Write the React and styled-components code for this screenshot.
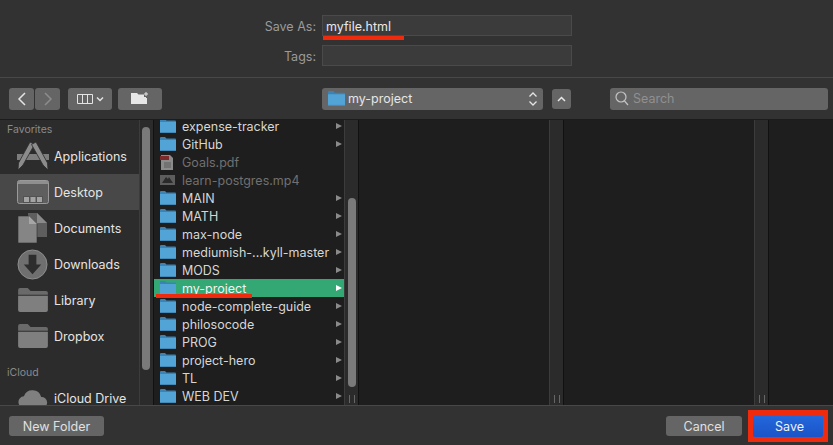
import React from 'react'
import styled, { createGlobalStyle } from 'styled-components'

const favorites = [
    { name: 'Applications', icon: 'apps' },
    { name: 'Desktop', icon: 'desktop', active: true },
    { name: 'Documents', icon: 'docs' },
    { name: 'Downloads', icon: 'downloads' },
    { name: 'Library', icon: 'folder' },
    { name: 'Dropbox', icon: 'folder' },
]

const files = [
    { name: 'expense-tracker' },
    { name: 'GitHub' },
    { name: 'Goals.pdf', kind: 'pdf' },
    { name: 'learn-postgres.mp4', kind: 'video' },
    { name: 'MAIN' },
    { name: 'MATH' },
    { name: 'max-node' },
    { name: 'mediumish-...kyll-master' },
    { name: 'MODS' },
    { name: 'my-project', selected: true },
    { name: 'node-complete-guide' },
    { name: 'philosocode' },
    { name: 'PROG' },
    { name: 'project-hero' },
    { name: 'TL' },
    { name: 'WEB DEV' },
]

const SideIcon = ({ type }) => {
    if (type === 'apps') return (
        <svg width="32" height="30" viewBox="0 0 32 30">
            <rect x="0" y="13" width="32" height="6" fill="#7d7d7d" />
            <path d="M13 1l4.500 2.500L6 24l-5 5 .5-7z" fill="#8c8c8c" stroke="#2c2c2c" strokeWidth=".8" />
            <path d="M19 1l-4.500 2.500L26 24l5 5-.5-7z" fill="#8c8c8c" stroke="#2c2c2c" strokeWidth=".8" />
        </svg>
    )
    if (type === 'desktop') return (
        <svg width="32" height="24" viewBox="0 0 32 24">
            <rect x=".5" y=".5" width="31" height="23" rx="2" fill="#5f5f5f" stroke="#9a9a9a" />
            <rect x="1" y="1" width="30" height="3" fill="#8f8f8f" />
            <rect x="6" y="16" width="20" height="7" fill="#525252" />
            <rect x="7" y="17" width="5" height="5" fill="#a3a3a3" />
            <rect x="13.500" y="17" width="5" height="5" fill="#a3a3a3" />
            <rect x="20" y="17" width="5" height="5" fill="#a3a3a3" />
        </svg>
    )
    if (type === 'docs') return (
        <svg width="29" height="30" viewBox="0 0 29 30">
            <path d="M10 0h9l10 10v14H10z" fill="#5e5e5e" />
            <path d="M19 0v10h10z" fill="#8a8a8a" />
            <path d="M0 3h11l8 8v19H0z" fill="#858585" stroke="#2c2c2c" strokeWidth=".6" />
            <path d="M11 3v8h8z" fill="#a6a6a6" />
        </svg>
    )
    if (type === 'downloads') return (
        <svg width="31" height="31" viewBox="0 0 32 32">
            <circle cx="16" cy="16" r="15" fill="#6f6f6f" stroke="#8e8e8e" />
            <path d="M12 6h8v10h5l-9 10-9-10h5z" fill="#2d2d2d" />
        </svg>
    )
    if (type === 'cloud') return (
        <svg width="30" height="20" viewBox="0 0 32 22">
            <path d="M7 22a6.500 6.500 0 0 1-1-13 10 10 0 0 1 19 1 6 6 0 0 1 1 12z" fill="#7f7f7f" />
        </svg>
    )
    return (
        <svg width="30" height="24" viewBox="0 0 31 25">
            <path d="M0 2a2 2 0 0 1 2-2h8l3 3h16a2 2 0 0 1 2 2v2H0z" fill="#6a6a6a" />
            <path d="M0 8h31v15a2 2 0 0 1-2 2H2a2 2 0 0 1-2-2z" fill="#7f7f7f" />
        </svg>
    )
}

const BlueFolder = ({ big }) => (
    <svg width={big ? 17 : 16} height={big ? 15 : 14} viewBox="0 0 16 14">
        <path d="M0 1a1 1 0 0 1 1-1h4l1.500 1.500H15a1 1 0 0 1 1 1V4H0z" fill="#3a83b4" />
        <path d="M0 3h16v10a1 1 0 0 1-1 1H1a1 1 0 0 1-1-1z" fill="#52a3d6" />
        <rect y="13" width="16" height="1" fill="#4488b5" />
    </svg>
)

const FileIcon = ({ kind }) => {
    if (kind === 'pdf') return (
        <svg width="14" height="15" viewBox="0 0 14 15">
            <path d="M1 0h9l3 3v12H1z" fill="#8b8b8b" />
            <rect y="1" width="9" height="4" fill="#7c2a2a" />
            <path d="M4 8h7M4 10h7M4 12h7" stroke="#5a5a5a" />
        </svg>
    )
    if (kind === 'video') return (
        <svg width="15" height="10" viewBox="0 0 15 10">
            <rect width="15" height="10" fill="#5d5d5d" />
            <path d="M2 8l4-6 2 2 1-2 4 6z" fill="#2a2a2a" />
        </svg>
    )
    return <BlueFolder />
}

export default function App() {
    return (
        <Dialog>
            <GlobalStyle />
            <Header>
                <FieldLabel>Save As:</FieldLabel>
                <FieldInput>
                    myfile.html
                    <FileNameMark />
                </FieldInput>
                <FieldLabel>Tags:</FieldLabel>
                <FieldInput />
            </Header>

            <Toolbar>
                <NavGroup>
                    <ToolButton $w={25}>
                        <svg width="10" height="14" viewBox="0 0 10 14"><path d="M8 1L2 7l6 6" fill="none" stroke="#e4e4e4" strokeWidth="1.500" /></svg>
                    </ToolButton>
                    <ToolButton $w={25}>
                        <svg width="10" height="14" viewBox="0 0 10 14"><path d="M2 1l6 6-6 6" fill="none" stroke="#8c8c8c" strokeWidth="1.500" /></svg>
                    </ToolButton>
                </NavGroup>
                <ToolButton $w={44}>
                    <svg width="27" height="12" viewBox="0 0 27 12" fill="none" stroke="#e4e4e4">
                        <path d="M.5 1.500h15v9H.5zM5.500 1.500v9M10.500 1.500v9" />
                        <path d="M20 4.500l3 3 3-3" strokeWidth="1.500" />
                    </svg>
                </ToolButton>
                <ToolButton $w={44}>
                    <svg width="18" height="13" viewBox="0 0 18 13">
                        <path d="M0 1h6l1.500 1.500H13V5h2v1h1v6H0z" fill="#e6e6e6" />
                        <path d="M15 0v4M13 2h4" stroke="#e6e6e6" />
                    </svg>
                </ToolButton>
                <PathPopup>
                    <BlueFolder big />
                    <PathName>my-project</PathName>
                    <svg width="10" height="16" viewBox="0 0 10 16" fill="none" stroke="#e4e4e4" strokeWidth="1.300">
                        <path d="M1.500 5.500L5 2l3.500 3.500M1.500 10.500L5 14l3.500-3.500" />
                    </svg>
                </PathPopup>
                <UpButton>
                    <svg width="9" height="6" viewBox="0 0 9 6"><path d="M1 5l3.500-3.500L8 5" fill="none" stroke="#e8e8e8" strokeWidth="1.500" /></svg>
                </UpButton>
                <SearchBox>
                    <svg width="14" height="15" viewBox="0 0 14 15" fill="none" stroke="#c4c4c4" strokeWidth="1.200">
                        <circle cx="6" cy="6" r="5" />
                        <path d="M9.500 10l3.500 4" />
                    </svg>
                    Search
                </SearchBox>
            </Toolbar>

            <Body>
                <Sidebar>
                    <SideTitle>Favorites</SideTitle>
                    {favorites.map(f => (
                        <SideRow key={f.name} $active={f.active}>
                            <SideIconSlot><SideIcon type={f.icon} /></SideIconSlot>
                            {f.name}
                        </SideRow>
                    ))}
                    <SideTitle>iCloud</SideTitle>
                    <SideRow>
                        <SideIconSlot><SideIcon type="cloud" /></SideIconSlot>
                        iCloud Drive
                    </SideRow>
                </Sidebar>
                <Track><Thumb $left={2} $top={7} $h={243} /></Track>

                <Column $w={190}>
                    <FileList>
                        {files.map(f => (
                            <FileRow key={f.name} $selected={f.selected} $dim={!!f.kind}>
                                <FileIconSlot><FileIcon kind={f.kind} /></FileIconSlot>
                                <FileName>{f.name}</FileName>
                                {!f.kind && <Arrow $selected={f.selected} />}
                                {f.selected && <ProjectMark />}
                            </FileRow>
                        ))}
                    </FileList>
                </Column>
                <Track>
                    <Thumb $left={3} $top={78} $h={189} />
                    <Grip />
                </Track>
                <Column $w={190} />
                <Track><Grip /></Track>
                <Column $w={190} />
                <Track><Grip /></Track>
                <Column $fill />
            </Body>

            <Footer>
                <FooterButton $w={95}>New Folder</FooterButton>
                <FooterRight>
                    <FooterButton $w={76}>Cancel</FooterButton>
                    <SaveFrame>
                        <SaveButton>Save</SaveButton>
                    </SaveFrame>
                </FooterRight>
            </Footer>
        </Dialog>
    )
}

const GlobalStyle = createGlobalStyle`
    html, body { margin: 0; padding: 0; background: #323232; }
    * { box-sizing: border-box; }
`

const Dialog = styled.div`
    width: 833px;
    height: 445px;
    overflow: hidden;
    display: flex;
    flex-direction: column;
    background: #323232;
    font-family: Inter, "Liberation Sans", sans-serif;
    font-size: 12.5px;
    color: #dcdcdc;
`

const Header = styled.div`
    height: 78px;
    flex: none;
    padding-top: 15px;
    display: grid;
    grid-template-columns: 316px 250px;
    grid-auto-rows: 21px;
    column-gap: 6px;
    row-gap: 9px;
    border-bottom: 1px solid #484848;
`

const FieldLabel = styled.div`
    text-align: right;
    line-height: 23px;
    color: #9b9b9b;
`

const FieldInput = styled.div`
    position: relative;
    background: #3b3b3b;
    border: 1px solid #4a4a4a;
    padding-left: 3px;
    line-height: 21px;
    color: #e8e8e8;
`

const FileNameMark = styled.span`
    position: absolute;
    left: 0;
    top: 20px;
    width: 81px;
    height: 4px;
    background: #f02a0c;
`

const Toolbar = styled.div`
    height: 42px;
    flex: none;
    display: flex;
    align-items: center;
    padding: 0 5px 0 9px;
    border-bottom: 1px solid #1c1c1c;
`

const NavGroup = styled.div`
    display: flex;
    gap: 1px;
    margin-right: 8px;
`

const ToolButton = styled.div`
    width: ${p => p.$w}px;
    height: 22px;
    margin-right: 6px;
    border-radius: 3px;
    background: #656565;
    display: flex;
    align-items: center;
    justify-content: center;
    ${NavGroup} & { margin-right: 0; }
`

const PathPopup = styled.div`
    width: 221px;
    height: 22px;
    margin-left: 154px;
    padding: 0 5px 0 6px;
    border-radius: 3px;
    background: #656565;
    display: flex;
    align-items: center;
    gap: 3px;
`

const PathName = styled.span`
    flex: 1;
    color: #e6e6e6;
`

const UpButton = styled.div`
    width: 19px;
    height: 20px;
    margin-left: 9px;
    border-radius: 3px;
    background: #656565;
    display: flex;
    align-items: center;
    justify-content: center;
`

const SearchBox = styled.div`
    width: 218px;
    height: 22px;
    margin-left: auto;
    padding-left: 5px;
    border-radius: 3px;
    background: #656565;
    display: flex;
    align-items: center;
    gap: 4px;
    color: #909090;
`

const Body = styled.div`
    flex: 1;
    min-height: 0;
    display: flex;
    background: #1e1e1e;
`

const Sidebar = styled.div`
    width: 139px;
    height: 285px;
    flex: none;
    overflow: hidden;
    background: #2c2c2c;
    padding-top: 1px;
`

const SideTitle = styled.div`
    height: 17px;
    padding-left: 7px;
    line-height: 17px;
    font-size: 10.5px;
    color: #8a8a8a;
    &:not(:first-child) { margin-top: 10px; margin-bottom: 8px; height: 17px; }
`

const SideRow = styled.div`
    min-height: 18px;
    height: 36px;
    flex: none;
    display: flex;
    align-items: center;
    background: ${p => (p.$active ? '#484848' : 'transparent')};
    color: #e4e4e4;
    &:last-child { height: 18px; }
`

const SideIconSlot = styled.div`
    width: 54px;
    flex: none;
    padding-left: 11px;
    display: flex;
    align-items: center;
    justify-content: center;
`

const Track = styled.div`
    position: relative;
    width: 15px;
    flex: none;
    background: #2b2b2b;
    border-left: 1px solid #3c3c3c;
    border-right: 1px solid #111;
`

const Thumb = styled.div`
    position: absolute;
    left: ${p => p.$left}px;
    top: ${p => p.$top}px;
    width: 8px;
    height: ${p => p.$h}px;
    border-radius: 4px;
    background: #7a7a7a;
`

const Grip = styled.div`
    position: absolute;
    left: 4px;
    bottom: 2px;
    width: 6px;
    height: 8px;
    border-left: 1px solid #666;
    border-right: 1px solid #666;
`

const Column = styled.div`
    ${p => (p.$fill ? 'flex: 1;' : `width: ${p.$w}px; flex: none;`)}
    min-width: 0;
    height: 285px;
    overflow: hidden;
`

const FileList = styled.div`
    margin-top: -3px;
`

const FileRow = styled.div`
    position: relative;
    height: 18px;
    display: flex;
    align-items: center;
    padding-right: 2px;
    background: ${p => (p.$selected ? '#33a874' : 'transparent')};
    color: ${p => (p.$selected ? '#f2f2f2' : p.$dim ? '#707070' : '#d6d6d6')};
`

const FileIconSlot = styled.div`
    width: 28px;
    flex: none;
    padding-left: 6px;
    display: flex;
    align-items: center;
`

const FileName = styled.span`
    flex: 1;
    white-space: nowrap;
`

const Arrow = styled.span`
    width: 0;
    height: 0;
    border-left: 6px solid ${p => (p.$selected ? '#fff' : '#8a8a8a')};
    border-top: 3.5px solid transparent;
    border-bottom: 3.5px solid transparent;
`

const ProjectMark = styled.span`
    position: absolute;
    left: 2px;
    top: 15px;
    width: 96px;
    height: 4px;
    background: #f02a0c;
`

const Footer = styled.div`
    height: 40px;
    flex: none;
    display: flex;
    align-items: center;
    justify-content: space-between;
    padding: 1px 5px 0 9px;
    border-top: 1px solid #484848;
`

const FooterRight = styled.div`
    display: flex;
    align-items: center;
    gap: 6px;
`

const FooterButton = styled.div`
    width: ${p => p.$w}px;
    height: 20px;
    border-radius: 3px;
    background: #656565;
    display: flex;
    align-items: center;
    justify-content: center;
    color: #e0e0e0;
`

const SaveFrame = styled.div`
    width: 80px;
    height: 32px;
    padding: 2px;
    border: 3px solid #f02a0c;
    background: #f02a0c;
`

const SaveButton = styled.div`
    height: 100%;
    padding-left: 3px;
    border-radius: 2px;
    background: linear-gradient(#2468dc, #1a54c8);
    display: flex;
    align-items: center;
    justify-content: center;
    color: #f2f2f2;
`
